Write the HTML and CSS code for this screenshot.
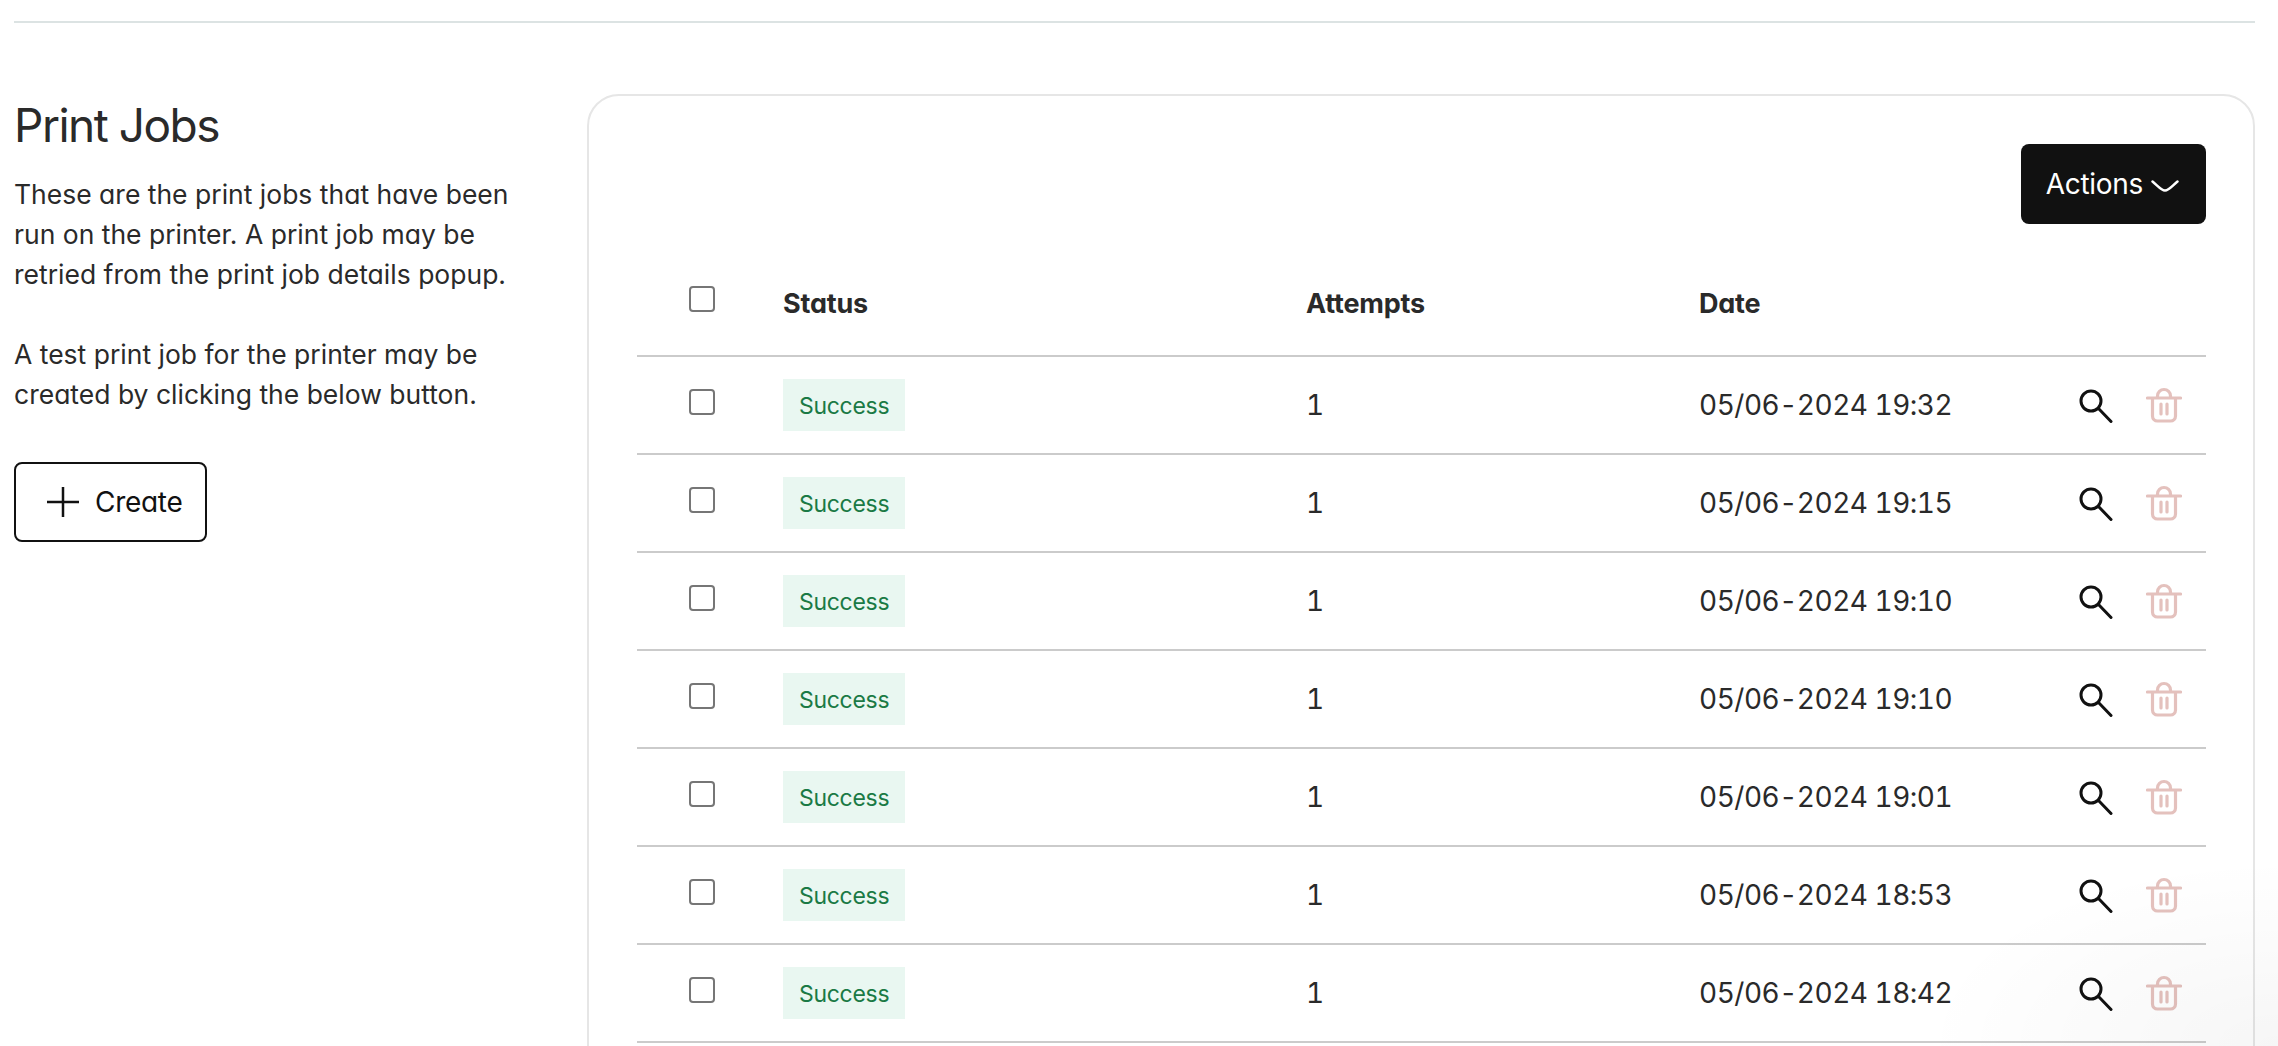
FILE: index.html
```html
<!DOCTYPE html>
<html lang="en">
<head>
<meta charset="utf-8">
<title>Print Jobs</title>
<link rel="stylesheet" href="styles.css">
</head>
<body>
<svg class="defs" width="0" height="0" aria-hidden="true">
  <symbol id="i-search" viewBox="0 0 36 36"><circle cx="14" cy="14" r="10" fill="none" stroke="currentColor" stroke-width="3"/><path d="M21.5 21.5 34 34.5" fill="none" stroke="currentColor" stroke-width="3" stroke-linecap="round"/></symbol>
  <symbol id="i-trash" viewBox="0 0 36 36"><path d="M1.5 11h33M6.5 11v18a5 5 0 0 0 5 5h13a5 5 0 0 0 5-5V11M11.500 11V9a6.500 6.500 0 0 1 13 0v2M15 17v10M21 17v10" fill="none" stroke="currentColor" stroke-width="3.200" stroke-linecap="round"/></symbol>
</svg>
<main class="page">
  <hr class="rule">
  <section class="layout">
    <aside class="intro">
      <h1 class="title">Print Jobs</h1>
      <p class="copy">These are the print jobs that have been<br>run on the printer. A print job may be<br>retried from the print job details popup.</p>
      <p class="copy">A test print job for the printer may be<br>created by clicking the below button.</p>
      <button class="btn btn-outline" type="button">
        <svg class="plus" viewBox="0 0 32 32" aria-hidden="true"><path d="M16 1v30M0 16h32" fill="none" stroke="currentColor" stroke-width="2.500"/></svg>
        Create
      </button>
    </aside>
    <div class="card">
      <div class="toolbar">
        <button class="btn btn-dark" type="button">Actions
          <svg class="chev" viewBox="0 0 28 12" aria-hidden="true"><path d="M1.500 1.500C6 5 10 10.500 14 10.500S22 5 26.500 1.500" fill="none" stroke="currentColor" stroke-width="2.500" stroke-linecap="round"/></svg>
        </button>
      </div>
      <table class="jobs">
        <colgroup><col class="c-check"><col class="c-status"><col class="c-att"><col class="c-date"><col></colgroup>
        <thead>
          <tr><th><input class="check" type="checkbox"></th><th>Status</th><th>Attempts</th><th>Date</th><th></th></tr>
        </thead>
        <tbody>
          <tr><td><input class="check" type="checkbox"></td><td><span class="badge">Success</span></td><td>1</td><td>05/06-2024 19:32</td><td><div class="acts"><svg class="ico ico-search"><use href="#i-search"/></svg><svg class="ico ico-trash"><use href="#i-trash"/></svg></div></td></tr>
          <tr><td><input class="check" type="checkbox"></td><td><span class="badge">Success</span></td><td>1</td><td>05/06-2024 19:15</td><td><div class="acts"><svg class="ico ico-search"><use href="#i-search"/></svg><svg class="ico ico-trash"><use href="#i-trash"/></svg></div></td></tr>
          <tr><td><input class="check" type="checkbox"></td><td><span class="badge">Success</span></td><td>1</td><td>05/06-2024 19:10</td><td><div class="acts"><svg class="ico ico-search"><use href="#i-search"/></svg><svg class="ico ico-trash"><use href="#i-trash"/></svg></div></td></tr>
          <tr><td><input class="check" type="checkbox"></td><td><span class="badge">Success</span></td><td>1</td><td>05/06-2024 19:10</td><td><div class="acts"><svg class="ico ico-search"><use href="#i-search"/></svg><svg class="ico ico-trash"><use href="#i-trash"/></svg></div></td></tr>
          <tr><td><input class="check" type="checkbox"></td><td><span class="badge">Success</span></td><td>1</td><td>05/06-2024 19:01</td><td><div class="acts"><svg class="ico ico-search"><use href="#i-search"/></svg><svg class="ico ico-trash"><use href="#i-trash"/></svg></div></td></tr>
          <tr><td><input class="check" type="checkbox"></td><td><span class="badge">Success</span></td><td>1</td><td>05/06-2024 18:53</td><td><div class="acts"><svg class="ico ico-search"><use href="#i-search"/></svg><svg class="ico ico-trash"><use href="#i-trash"/></svg></div></td></tr>
          <tr><td><input class="check" type="checkbox"></td><td><span class="badge">Success</span></td><td>1</td><td>05/06-2024 18:42</td><td><div class="acts"><svg class="ico ico-search"><use href="#i-search"/></svg><svg class="ico ico-trash"><use href="#i-trash"/></svg></div></td></tr>
        </tbody>
      </table>
    </div>
  </section>
</main>
<div class="corner-shade" aria-hidden="true"></div>
</body>
</html>
```
FILE: styles.css
```css
* { box-sizing: border-box; }
html, body { height: 1046px; overflow: hidden; }
body {
  margin: 0;
  background: #fff;
  color: #2a2a2a;
  font-family: Inter, "Liberation Sans", sans-serif;
  font-feature-settings: "cv11" 1;
}
.defs { position: absolute; }
.page { padding: 21px 23px 0 14px; }
.rule { height: 2px; margin: 0; border: 0; background: #dce3e3; }
.layout {
  display: grid;
  grid-template-columns: 573px 1fr;
  margin-top: 71px;
}
.intro { padding-top: 5px; }
.title {
  margin: 0 0 23px;
  font-size: 46px;
  line-height: 52px;
  font-weight: 400;
  letter-spacing: -1.5px;
}
.copy {
  margin: 0 0 40px;
  font-size: 26.500px;
  line-height: 40px;
}
.btn {
  display: inline-flex;
  align-items: center;
  height: 80px;
  border-radius: 8px;
  font: inherit;
  font-size: 28px;
  letter-spacing: -0.3px;
}
.btn-outline {
  width: 193px;
  margin-top: 8px;
  padding: 0 0 0 31px;
  gap: 16px;
  border: 2px solid #111;
  background: #fff;
  color: #111;
}
.plus { width: 32px; height: 32px; }
.btn-dark {
  padding: 0 27px 0 25px;
  gap: 8px;
  border: 0;
  background: #111;
  color: #fff;
}
.chev { width: 28px; height: 12px; margin-top: 3px; }
.card {
  height: 1100px;
  padding: 48px 47px 0 48px;
  border: 2px solid #e6e6e6;
  border-radius: 32px;
  background: #fff;
}
.toolbar { display: flex; justify-content: flex-end; }
.jobs {
  width: 100%;
  margin-top: 34px;
  border-collapse: collapse;
  table-layout: fixed;
  font-size: 28px;
}
.c-check { width: 146px; }
.c-status { width: 523px; }
.c-att { width: 393px; }
.c-date { width: 378px; }
.jobs th, .jobs td {
  height: 98px;
  padding: 0;
  text-align: left;
  vertical-align: middle;
  border-bottom: 2px solid #cbcbcb;
}
.jobs td { letter-spacing: -0.5px; font-feature-settings: "cv11" 1, "tnum" 1; }
.jobs th { font-weight: 700; letter-spacing: -0.2px; font-size: 27px; padding-bottom: 6px; }
.check {
  appearance: none;
  display: block;
  width: 26px;
  height: 26px;
  margin: -6px 0 0 52px;
  border: 2px solid #767676;
  border-radius: 4px;
  background: #fff;
}
.jobs th .check { margin-top: -9px; }
.jobs .badge {
  display: inline-block;
  padding: 1px 16px 0;
  height: 52px;
  background: #e9f7f1;
  color: #1a7a45;
  font-size: 23px;
  line-height: 52px;
  letter-spacing: -0.3px;
  vertical-align: middle;
}
.acts { display: flex; align-items: center; gap: 33px; }
.ico { display: block; width: 36px; height: 36px; }
.ico-search { color: #111; }
.ico-trash { color: #e4c1bd; }
.corner-shade {
  position: absolute;
  right: 0;
  bottom: 0;
  width: 360px;
  height: 190px;
  pointer-events: none;
  background: radial-gradient(ellipse at 100% 100%, rgba(0,0,0,.035), rgba(0,0,0,0) 70%);
}
```
